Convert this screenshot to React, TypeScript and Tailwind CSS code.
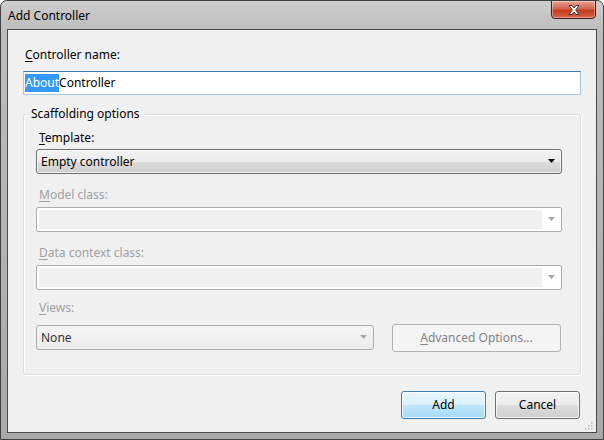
import { ReactNode } from "react";

const font = { fontFamily: '"Noto Sans", "Open Sans", sans-serif' };

const Label = ({ ch, rest, disabled }: { ch: string; rest: string; disabled?: boolean }) => (
  <div className={`h-4 text-[12px] leading-4 ${disabled ? "text-[#a0a0a0]" : "text-black"}`}>
    <span className="underline underline-offset-2">{ch}</span>
    {rest}
  </div>
);

const Arrow = ({ color }: { color: string }) => (
  <svg width="8" height="5" viewBox="0 0 8 5">
    <path d="M0 0h7L3.5 4z" fill={color} />
  </svg>
);

const DisabledCombo = () => (
  <div className="w-[526px] h-[25px] border border-[#acacac] rounded-[2px] bg-white flex p-[2px] pr-0">
    <div className="flex-1 bg-[#f0f0f0]" />
    <div className="w-[19px] flex items-center justify-center">
      <Arrow color="#a6a6a6" />
    </div>
  </div>
);

const Button = ({ children, primary }: { children: ReactNode; primary?: boolean }) => (
  <button
    className={`w-[85px] h-[28px] rounded-[3px] border text-[12px] text-black ${
      primary
        ? "border-[#3c7fb1] bg-[linear-gradient(#eaf6fd,#d9f0fc_50%,#bee6fd_50%,#a7d9f5)] shadow-[inset_0_0_0_1px_#ffffffb0]"
        : "border-[#707070] bg-[linear-gradient(#f2f2f2,#ebebeb_50%,#dddddd_50%,#cfcfcf)] shadow-[inset_0_0_0_1px_#ffffffb0]"
    }`}
  >
    {children}
  </button>
);

export default function App() {
  return (
    <div style={font} className="w-[604px] h-[440px] flex flex-col rounded-t-[7px] border border-[#404040] bg-[linear-gradient(#cdcdcd,#bdbdbd_30px,#a9a9a9)] overflow-hidden">
      {/* title bar */}
      <div className="h-[28px] flex items-start justify-between pl-[7px] pr-[7px]">
        <div className="mt-[7px] text-[12px] leading-4 text-black">Add Controller</div>
        <div className="w-[45px] h-[19px] -mt-px rounded-b-[4px] border border-[#3b1f1a] bg-[linear-gradient(#e8a493,#d2654e_45%,#c23b1c_55%,#d7624a)] flex items-center justify-center shadow-[inset_0_0_0_1px_#ffffff60]">
          <svg width="14" height="12" viewBox="0 0 14 12">
            <path d="M2 1.5h3l2 2.5 2-2.5h3L8.6 6 12 10.5H9L7 8 5 10.5H2L5.4 6z" fill="#fff" stroke="#3a3a3a" strokeWidth="1" strokeLinejoin="round" />
          </svg>
        </div>
      </div>

      {/* client area */}
      <div className="mx-[6px] mb-[6px] flex-1 border border-[#4a4a4a] bg-[#f0f0f0] flex flex-col px-[15px] relative">
        <div className="mt-[17px] pl-[2px]">
          <Label ch="C" rest="ontroller name:" />
        </div>
        <div className="mt-[8px] w-[558px] h-[24px] border border-[#a4c9e3] border-t-[#3d7bad] bg-white flex items-center pl-[1px] text-[12px] text-black">
          <span className="bg-[#3399ff] text-white leading-[18px]">About</span>
          <span className="leading-[18px]">Controller</span>
        </div>

        {/* scaffolding group */}
        <div className="relative mt-[19px] w-[558px] h-[261px] border border-[#d5dfe5] rounded-[3px] shadow-[inset_1px_1px_0_#fff,1px_1px_0_#fff] pl-[12px] pt-[15px]">
          <div className="absolute -top-[9px] left-[4px] px-[3px] bg-[#f0f0f0] text-[12px] leading-4 text-black">
            Scaffolding options
          </div>
          <div className="pl-[3px]">
            <Label ch="T" rest="emplate:" />
          </div>
          <div className="mt-[3px] w-[526px] h-[25px] rounded-[3px] border border-[#707070] bg-[linear-gradient(#f2f2f2,#ebebeb_50%,#dddddd_50%,#cfcfcf)] shadow-[inset_0_0_0_1px_#ffffffb0] flex items-center justify-between pl-[4px] pr-[5px] text-[12px] text-black">
            <span>Empty controller</span>
            <Arrow color="#000" />
          </div>

          <div className="mt-[13px] pl-[3px]">
            <Label ch="M" rest="odel class:" disabled />
          </div>
          <div className="mt-[4px]">
            <DisabledCombo />
          </div>

          <div className="mt-[13px] pl-[3px]">
            <Label ch="D" rest="ata context class:" disabled />
          </div>
          <div className="mt-[4px]">
            <DisabledCombo />
          </div>

          <div className="mt-[10px] pl-[3px]">
            <Label ch="V" rest="iews:" disabled />
          </div>
          <div className="mt-[8px] flex items-start gap-[18px]">
            <div className="w-[338px] h-[25px] mt-[1px] rounded-[3px] border border-[#acacac] bg-[linear-gradient(#f4f4f4,#ececec)] flex items-center justify-between pl-[4px] pr-[5px] text-[12px] text-[#333]">
              <span>None</span>
              <Arrow color="#a6a6a6" />
            </div>
            <div className="w-[169px] h-[28px] rounded-[3px] border border-[#adb2b5] bg-[#f4f4f4] flex items-center justify-center text-[12px] text-[#838383]">
              <span className="underline underline-offset-2">A</span>dvanced Options...
            </div>
          </div>
        </div>

        <div className="mt-[16px] flex justify-end gap-[9px] pr-[1px]">
          <Button primary>Add</Button>
          <Button>Cancel</Button>
        </div>

        <svg className="absolute right-[3px] bottom-[2px]" width="10" height="10" viewBox="0 0 10 10">
          {[[8, 2], [8, 5], [8, 8], [5, 5], [5, 8], [2, 8]].map(([x, y]) => (
            <rect key={`${x}-${y}`} x={x} y={y} width="1.5" height="1.5" fill="#b8b8b8" />
          ))}
        </svg>
      </div>
    </div>
  );
}
